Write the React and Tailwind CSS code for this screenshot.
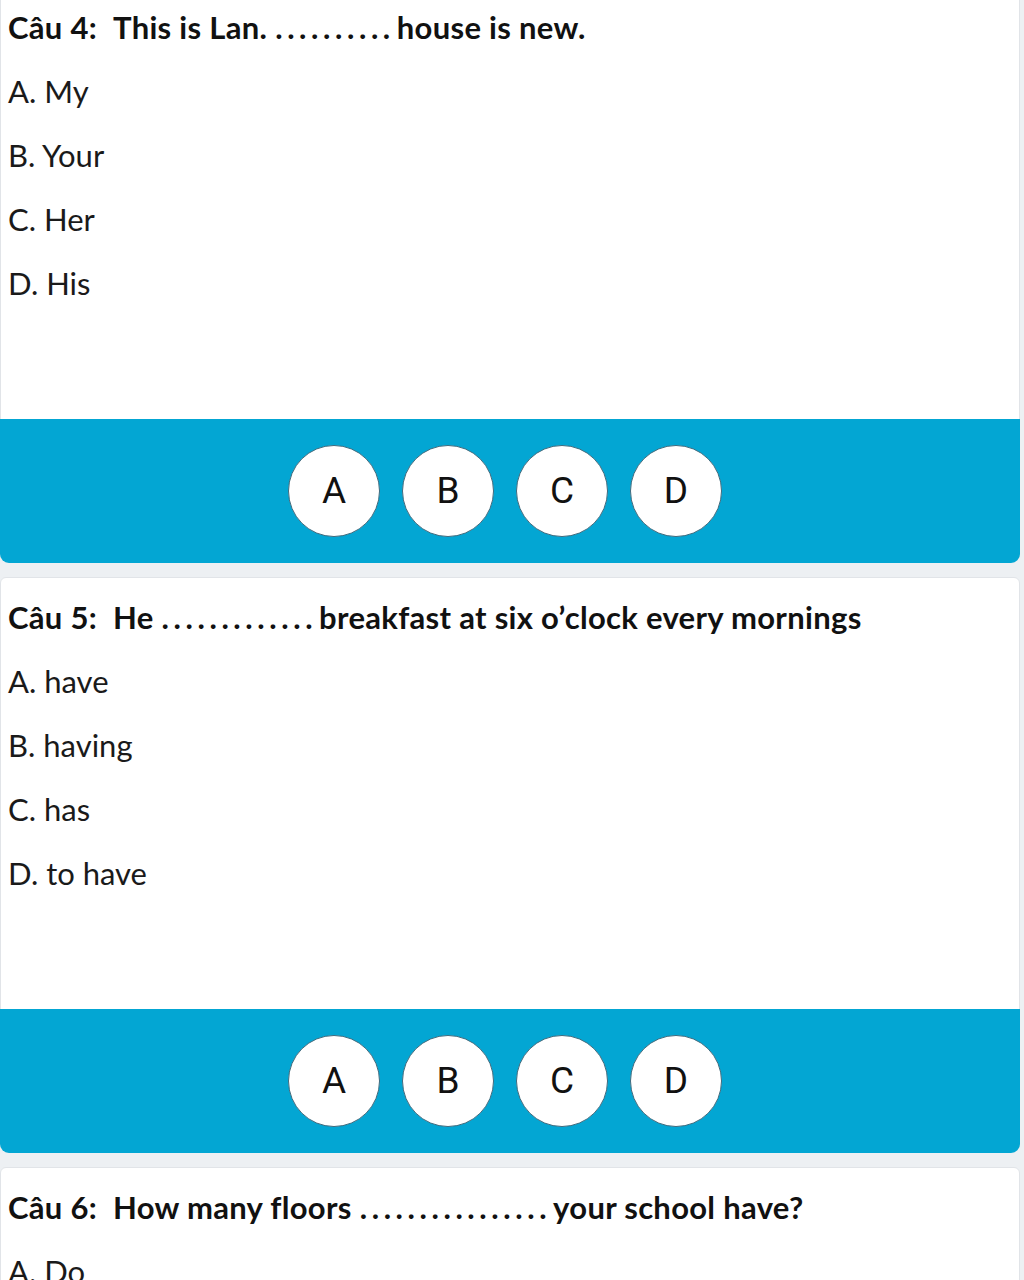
import React from "react";

const questions = [
  {
    q: "Câu 4:",
    before: "This is Lan.",
    dots: "..........",
    after: "house is new.",
    opts: ["A. My", "B. Your", "C. Her", "D. His"],
  },
  {
    q: "Câu 5:",
    before: "He",
    dots: ".............",
    after: "breakfast at six o’clock every mornings",
    opts: ["A. have", "B. having", "C. has", "D. to have"],
  },
  {
    q: "Câu 6:",
    before: "How many floors",
    dots: "................",
    after: "your school have?",
    opts: ["A. Do", "B. Does", "C. Is", "D. Are"],
  },
];

function Card({ item }) {
  return (
    <div className="mr-[4px] rounded-t-[6px] rounded-b-[9px] border border-[#e1e4e8] bg-white">
      <div className="pl-[7px] pt-[7px] pb-[104px] font-['Lato','Liberation_Sans',sans-serif] text-[#111]">
        <div className="flex h-[64px] items-center whitespace-nowrap text-[31px] font-bold tracking-[0.3px]">
          <span>{item.q}</span>
          <span className="ml-[16px]">{item.before}</span>
          <span className="ml-[8px] tracking-[4.6px]">{item.dots}</span>
          <span className="ml-[2px]">{item.after}</span>
        </div>
        {item.opts.map((o) => (
          <div key={o} className="flex h-[64px] items-center text-[31px] text-[#1a1a1a]">
            {o}
          </div>
        ))}
      </div>
      <div className="-mx-px -mb-px flex h-[144px] items-center justify-center gap-[22px] rounded-b-[9px] bg-[#03a6d3] pr-[10px]">
        {["A", "B", "C", "D"].map((l) => (
          <div
            key={l}
            className="flex h-[92px] w-[92px] items-center justify-center rounded-full border-[1.5px] border-[#3f6a7d] bg-white font-['Roboto','Liberation_Sans',sans-serif] text-[37px] text-[#111]"
          >
            {l}
          </div>
        ))}
      </div>
    </div>
  );
}

export default function App() {
  return (
    <div className="h-[1280px] overflow-hidden bg-[#edf0f3]">
      <div className="-mt-[13px] flex flex-col gap-[14px]">
        {questions.map((q) => (
          <Card key={q.q} item={q} />
        ))}
      </div>
    </div>
  );
}
